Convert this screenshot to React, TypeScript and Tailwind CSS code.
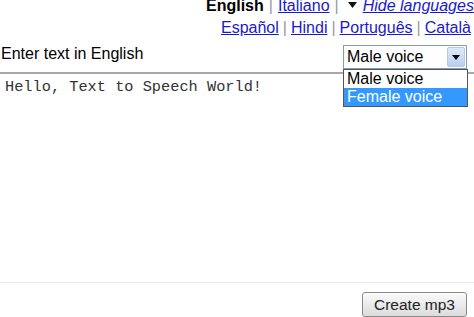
import React from "react";

export default function App() {
  const link = "text-[#1a1acc] underline";
  const sep = "text-[#999] mx-[4px]";
  const sep1 = "text-[#999] mx-[5px]";
  return (
    <div className="relative w-[474px] h-[317px] overflow-hidden bg-white font-['Liberation_Sans',Arial,sans-serif] text-[16px] text-black">
      <div className="whitespace-nowrap pl-[206px] leading-[17px] h-[17px] -mt-[3px]">
        <span className="font-bold">English</span>
        <span className={sep1}>|</span>
        <span className={link}>Italiano</span>
        <span className={sep1}>|</span>
        <svg width="9" height="6" viewBox="0 0 9 6" className="inline-block ml-[4px] mr-[6px] align-[3px]">
          <path d="M0 0h9L4.5 6z" fill="#111" />
        </svg>
        <span className={link + " italic"}>Hide languages</span>
      </div>
      <div className="whitespace-nowrap pl-[221px] mt-[5px] leading-[17px] h-[17px]">
        <span className={link}>Español</span>
        <span className={sep}>|</span>
        <span className={link}>Hindi</span>
        <span className={sep}>|</span>
        <span className={link}>Português</span>
        <span className={sep}>|</span>
        <span className={link}>Català</span>
      </div>
      <div className="flex items-start justify-between mt-[9px] pr-[7px]">
        <div className="pl-[1px] leading-[18px]">Enter text in English</div>
        <div className="relative">
          <div className="flex h-[24px] w-[124px] border border-[#7f9db9] bg-white">
            <div className="flex-1 pl-[3px] leading-[22px]">Male voice</div>
            <div className="w-[18px] m-[1px] bg-gradient-to-b from-[#dde9f8] to-[#b9d0ef] border border-[#b5c8e6] rounded-[2px] flex items-center justify-center">
              <svg width="8" height="5" viewBox="0 0 8 5"><path d="M0 0h8L4 5z" fill="#000" /></svg>
            </div>
          </div>
          <div className="absolute left-0 top-[24px] w-[125px] border border-[#555] bg-white z-10 leading-[18px]">
            <div className="pl-[3px] h-[18px]">Male voice</div>
            <div className="pl-[3px] h-[18px] bg-[#3399ff] text-white">Female voice</div>
          </div>
        </div>
      </div>
      <div className="mt-[3px] h-[211px] border-t-2 border-t-[#a8a8a8] border-b border-b-[#e8e8e8] font-['Liberation_Mono',monospace] text-[15.3px] leading-[17px] pl-[5px] pt-[5px] text-[#333]">
        Hello, Text to Speech World!
      </div>
      <div className="flex justify-end pr-[7px] mt-[9px]">
        <button className="h-[25px] w-[105px] border border-[#8a8a8a] rounded-[3px] bg-gradient-to-b from-[#fafafa] to-[#dcdcdc] text-[15.5px] leading-[23px] text-[#222]">
          Create mp3
        </button>
      </div>
    </div>
  );
}
